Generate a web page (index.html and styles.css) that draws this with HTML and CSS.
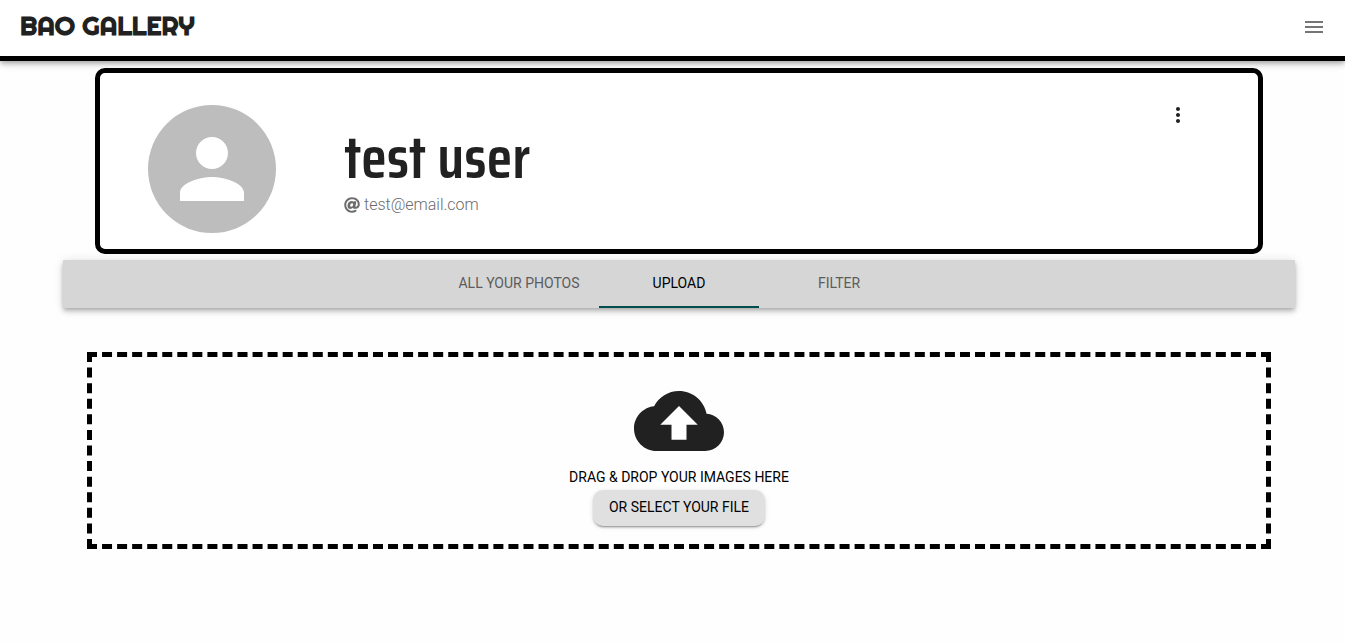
FILE: index.html
```html
<!DOCTYPE html>
<html lang="en">
<head>
<meta charset="utf-8">
<meta name="viewport" content="width=device-width, initial-scale=1">
<title>Bao Gallery</title>
<link rel="stylesheet" href="styles.css">
</head>
<body>
<header class="topbar">
  <a class="brand" href="#">BAO GALLERY</a>
  <button class="icon-button menu-button" type="button" aria-label="Open menu">
    <svg class="icon" viewBox="0 0 24 24"><path d="M3 18h18v-2H3v2zm0-5h18v-2H3v2zm0-7v2h18V6H3z"/></svg>
  </button>
</header>
<main class="page">
  <div class="container">
    <section class="profile">
      <div class="avatar">
        <svg class="avatar-icon" viewBox="0 0 24 24"><path d="M12 12c2.210 0 4-1.790 4-4s-1.790-4-4-4-4 1.790-4 4 1.790 4 4 4zm0 2c-2.670 0-8 1.340-8 4v2h16v-2c0-2.660-5.330-4-8-4z"/></svg>
      </div>
      <div class="identity">
        <h1 class="username">test user</h1>
        <p class="email"><svg class="at-icon" viewBox="0 0 512 512"><path d="M256 8C118.941 8 8 118.919 8 256c0 137.059 110.919 248 248 248 48.154 0 95.342-14.140 135.408-40.223 12.005-7.815 14.625-24.288 5.552-35.372l-10.177-12.433c-7.671-9.371-21.179-11.667-31.373-5.129C325.920 429.757 291.314 440 256 440c-101.458 0-184-82.542-184-184S154.542 72 256 72c100.139 0 184 57.619 184 160 0 38.786-21.093 79.742-58.170 83.693-17.349-.454-16.910-12.857-13.476-30.024l23.433-121.110C394.653 149.750 383.308 136 368.225 136h-44.981a13.518 13.518 0 0 0-13.432 11.993l-.01.092c-14.697-17.901-40.448-21.775-59.971-21.775-74.580 0-137.831 62.234-137.831 151.460 0 65.303 36.785 105.870 96 105.870 26.984 0 57.369-15.637 74.991-38.333 9.522 34.104 40.613 34.104 70.710 34.104C462.609 379.410 504 307.798 504 232 504 95.653 394.023 8 256 8zm-21.680 304.430c-22.249 0-36.070-15.623-36.070-40.771 0-44.993 30.779-72.729 58.630-72.729 22.292 0 35.601 15.241 35.601 40.770 0 45.061-33.875 72.730-58.161 72.730z"/></svg><span>test@email.com</span></p>
      </div>
      <button class="icon-button more-button" type="button" aria-label="Profile options">
        <svg class="icon" viewBox="0 0 24 24"><path d="M12 8c1.100 0 2-.9 2-2s-.9-2-2-2-2 .9-2 2 .9 2 2 2zm0 2c-1.100 0-2 .9-2 2s.9 2 2 2 2-.9 2-2-.9-2-2-2zm0 6c-1.100 0-2 .9-2 2s.9 2 2 2 2-.9 2-2-.9-2-2-2z"/></svg>
      </button>
    </section>
    <div class="tabs" role="tablist">
      <button class="tab" type="button" role="tab" aria-selected="false">ALL YOUR PHOTOS</button>
      <button class="tab tab-active" type="button" role="tab" aria-selected="true">UPLOAD</button>
      <button class="tab" type="button" role="tab" aria-selected="false">FILTER</button>
    </div>
    <section class="dropzone">
      <svg class="cloud-icon" viewBox="0 0 24 24"><path d="M19.350 10.040C18.670 6.590 15.640 4 12 4 9.110 4 6.600 5.640 5.350 8.040 2.340 8.360 0 10.910 0 14c0 3.310 2.690 6 6 6h13c2.760 0 5-2.240 5-5 0-2.640-2.050-4.780-4.650-4.960zM14 13v4h-4v-4H7l5-5 5 5h-3z"/></svg>
      <p class="drop-text">DRAG &amp; DROP YOUR IMAGES HERE</p>
      <button class="select-button" type="button">OR SELECT YOUR FILE</button>
    </section>
  </div>
</main>
</body>
</html>
```
FILE: styles.css
```css
* {
  box-sizing: border-box;
}

body {
  margin: 0;
  background: #fefefe;
  color: #212121;
  font-family: Roboto, "Liberation Sans", sans-serif;
}

button {
  border: 0;
  margin: 0;
  font-family: inherit;
  cursor: pointer;
}

svg {
  display: block;
  fill: currentColor;
}

.topbar {
  display: flex;
  align-items: center;
  justify-content: space-between;
  padding: 2px 16px 6px 20px;
  border-bottom: 5px solid #000;
  background: #fff;
  box-shadow: 0 2px 4px -1px rgba(0, 0, 0, 0.2), 0 4px 5px rgba(0, 0, 0, 0.14), 0 1px 10px rgba(0, 0, 0, 0.12);
}

.brand {
  color: #212121;
  font-family: Righteous, Lato, sans-serif;
  font-size: 26px;
  font-weight: 700;
  line-height: 48px;
  text-decoration: none;
}

.icon-button {
  padding: 3px;
  background: transparent;
  color: inherit;
}

.icon {
  width: 24px;
  height: 24px;
}

.menu-button {
  margin-top: 2px;
  color: #757575;
}

.page {
  padding: 7px 0 24px 13px;
}

.container {
  max-width: 1232px;
  margin: 0 auto;
}

.profile {
  display: flex;
  align-items: flex-start;
  margin: 0 32px 6px;
  padding: 24px 65px 16px 48px;
  border: 5px solid #000;
  border-radius: 10px;
  background: #fff;
}

.avatar {
  flex: none;
  display: grid;
  place-items: center;
  width: 128px;
  height: 128px;
  margin-top: 8px;
  border-radius: 50%;
  background: #bdbdbd;
  color: #fff;
}

.avatar-icon {
  width: 96px;
  height: 96px;
}

.identity {
  flex: 1;
  padding: 24px 0 0 68px;
}

.username {
  margin: 0;
  font-family: "Saira Condensed", "Liberation Sans Narrow", "Roboto Condensed", Roboto, sans-serif;
  font-size: 60px;
  font-weight: 600;
  line-height: 72px;
}

.email {
  display: flex;
  align-items: center;
  gap: 4px;
  margin: 0;
  color: #6c6c6c;
  font-size: 16px;
  font-weight: 300;
  line-height: 24px;
}

.at-icon {
  width: 16px;
  height: 16px;
}

.more-button {
  margin-top: 3px;
}

.tabs {
  display: flex;
  justify-content: center;
  background: #d6d6d6;
  box-shadow: 0 2px 4px -1px rgba(0, 0, 0, 0.2), 0 4px 5px rgba(0, 0, 0, 0.14), 0 1px 10px rgba(0, 0, 0, 0.12);
}

.tab {
  width: 160px;
  height: 48px;
  padding: 0;
  border-bottom: 2px solid transparent;
  background: transparent;
  color: #5c5c5c;
  font-size: 14px;
  font-weight: 400;
}

.tab-active {
  border-bottom-color: #004d4d;
  color: #000;
}

.dropzone {
  display: flex;
  flex-direction: column;
  align-items: center;
  margin: 44px 24px 0;
  padding: 19px 16px 18px;
  border: 5px dashed #000;
}

.cloud-icon {
  width: 90px;
  height: 90px;
}

.drop-text {
  margin: 0 0 2px;
  font-size: 14px;
  line-height: 22px;
  color: #000;
}

.select-button {
  height: 36px;
  padding: 0 16px 2px;
  border-radius: 10px;
  background: #e0e0e0;
  color: #000;
  font-size: 14px;
  font-weight: 400;
  box-shadow: 0 3px 1px -2px rgba(0, 0, 0, 0.2), 0 2px 2px rgba(0, 0, 0, 0.14), 0 1px 5px rgba(0, 0, 0, 0.12);
}
```
